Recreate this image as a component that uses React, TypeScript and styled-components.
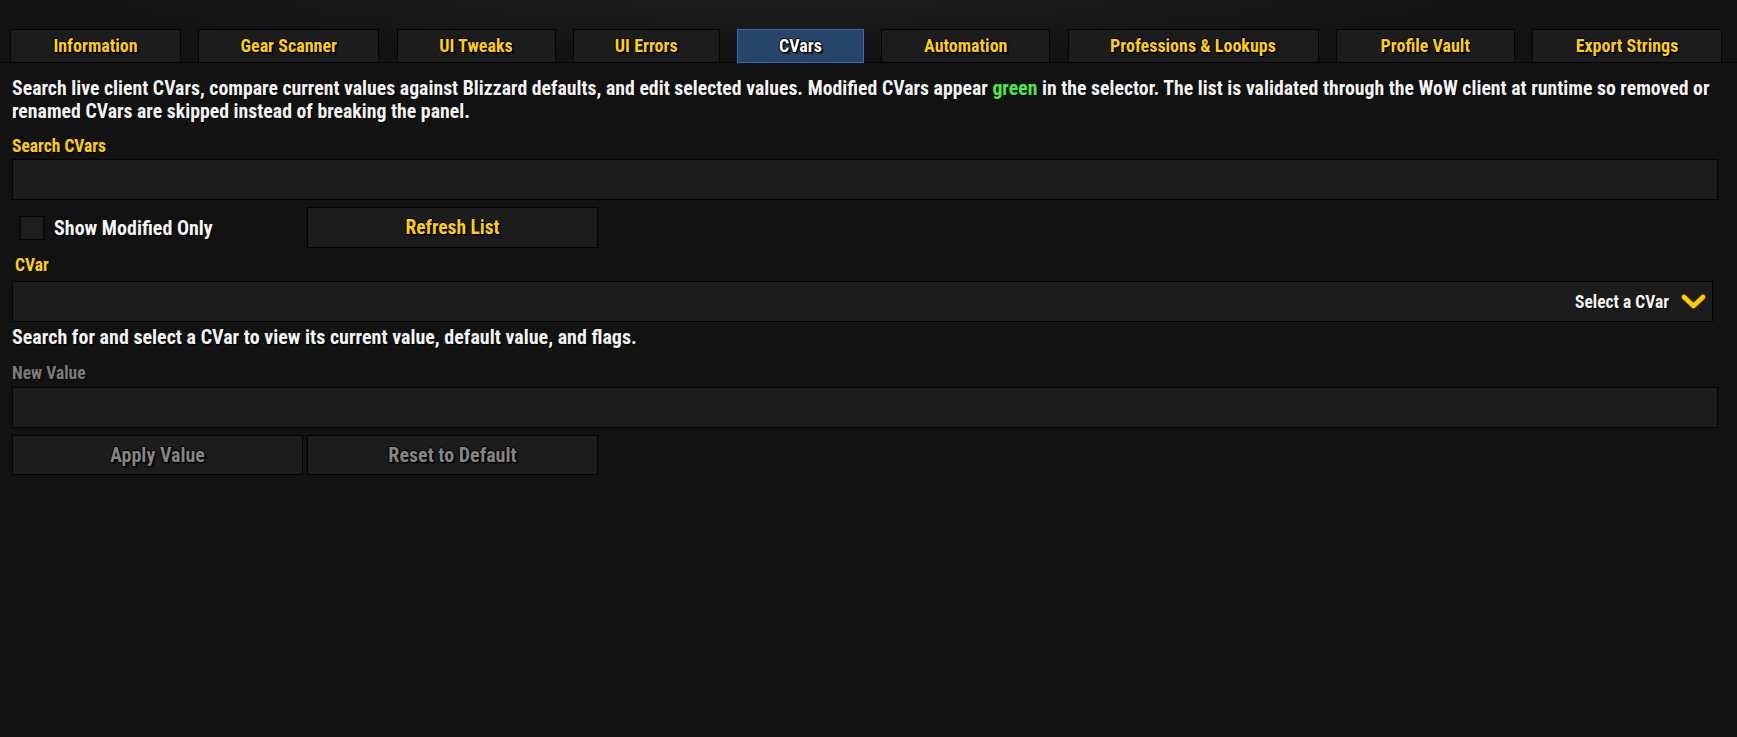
import React from "react";
import styled, { createGlobalStyle, css } from "styled-components";

const FONT = `"Roboto Condensed", "Roboto", "Open Sans", sans-serif`;

const GlobalStyle = createGlobalStyle`
  html, body {
    margin: 0;
    padding: 0;
    background: #121212;
  }
  body {
    font-family: ${FONT};
    font-stretch: condensed;
    font-weight: 700;
    color: #f2f2f2;
  }
  #root {
    min-height: 737px;
  }
`;

const outline = css`
  text-shadow: -1px 0 #000, 1px 0 #000, 0 -1px #000, 0 1px #000, 1px 1px #000,
    2px 2px 1px rgba(0, 0, 0, 0.6);
`;

const softShadow = css`
  text-shadow: 1px 1px 1px #000;
`;

const Page = styled.div`
  min-height: 737px;
  box-sizing: border-box;
  padding-top: 29px;
  background:
    radial-gradient(ellipse 900px 60px at 45% 0px, rgba(40, 40, 40, 0.5), transparent),
    #121212;
`;

const TabStrip = styled.div`
  border-bottom: 1px solid #080808;
  padding-left: 10px;
`;

const TabRow = styled.nav`
  display: flex;
  width: 1712px;
  justify-content: space-between;
`;

const Tab = styled.div<{ $w: number; $active?: boolean }>`
  width: ${(p) => p.$w}px;
  height: 34px;
  box-sizing: border-box;
  margin-bottom: -1px;
  padding-bottom: 2px;
  display: flex;
  align-items: center;
  justify-content: center;
  font-size: 18px;
  color: ${(p) => (p.$active ? "#ffffff" : "#ffd100")};
  background: ${(p) => (p.$active ? "#26456b" : "#1c1c1c")};
  border: 1px solid ${(p) => (p.$active ? "#3b6cb2" : "#040404")};
  ${outline}
`;

const Content = styled.main`
  width: 1706px;
  margin-left: 12px;
  display: flex;
  flex-direction: column;
`;

const Desc = styled.p`
  margin: 14px -10px 0 0;
  font-size: 19.8px;
  line-height: 23px;
  color: #f4f4f4;
  ${softShadow}
`;

const Green = styled.span`
  color: #48ec48;
`;

const FieldLabel = styled.div<{ $muted?: boolean; $mt: number; $indent?: number }>`
  margin-top: ${(p) => p.$mt}px;
  padding-left: ${(p) => p.$indent ?? 0}px;
  font-size: 17.5px;
  line-height: 20px;
  color: ${(p) => (p.$muted ? "#7c7c7c" : "#ffd100")};
  ${softShadow}
`;

const InputBox = styled.div<{ $mt: number }>`
  margin-top: ${(p) => p.$mt}px;
  height: 41px;
  box-sizing: border-box;
  background: #1c1c1c;
  border: 1px solid #030303;
`;

const Dropdown = styled.div`
  margin-top: 6px;
  width: 1701px;
  height: 41px;
  box-sizing: border-box;
  background: #1c1c1c;
  border: 1px solid #030303;
  display: flex;
  align-items: center;
  justify-content: flex-end;
  gap: 12px;
  padding-right: 6px;
`;

const DropText = styled.span`
  font-size: 17.5px;
  color: #f4f4f4;
  ${softShadow}
`;

const Chevron = styled.svg`
  width: 25px;
  height: 16px;
  display: block;
`;

const ControlGrid = styled.div<{ $mt: number }>`
  margin-top: ${(p) => p.$mt}px;
  display: grid;
  grid-template-columns: 291px 291px;
  column-gap: 4px;
  height: 41px;
`;

const CheckWrap = styled.label`
  display: flex;
  align-items: center;
  gap: 10px;
  padding-left: 8px;
  font-size: 20px;
  color: #f4f4f4;
  ${softShadow}
`;

const CheckBox = styled.span`
  width: 24px;
  height: 24px;
  box-sizing: border-box;
  background: #1e1e1e;
  border: 1px solid #050505;
  display: block;
`;

const Button = styled.div<{ $disabled?: boolean }>`
  box-sizing: border-box;
  height: ${(p) => (p.$disabled ? 40 : 41)}px;
  padding-bottom: 1px;
  background: #1c1c1c;
  border: 1px solid #030303;
  display: flex;
  align-items: center;
  justify-content: center;
  font-size: ${(p) => (p.$disabled ? 20 : 19.5)}px;
  color: ${(p) => (p.$disabled ? "#858585" : "#ffd100")};
  ${outline}
`;

const HelpText = styled.p`
  margin: 4px 0 0;
  font-size: 20px;
  line-height: 23px;
  color: #f4f4f4;
  ${softShadow}
`;

const tabs: { label: string; w: number; active?: boolean }[] = [
  { label: "Information", w: 171 },
  { label: "Gear Scanner", w: 181 },
  { label: "UI Tweaks", w: 159 },
  { label: "UI Errors", w: 147 },
  { label: "CVars", w: 127, active: true },
  { label: "Automation", w: 169 },
  { label: "Professions & Lookups", w: 251 },
  { label: "Profile Vault", w: 179 },
  { label: "Export Strings", w: 190 },
];

export default function App() {
  return (
    <>
      <GlobalStyle />
      <Page>
        <TabStrip>
          <TabRow>
            {tabs.map((t) => (
              <Tab key={t.label} $w={t.w} $active={t.active}>
                {t.label}
              </Tab>
            ))}
          </TabRow>
        </TabStrip>
        <Content>
          <Desc>
            Search live client CVars, compare current values against Blizzard defaults, and edit selected
            values. Modified CVars appear <Green>green</Green> in the selector. The list is validated through
            the WoW client at runtime so removed or renamed CVars are skipped instead of breaking the panel.
          </Desc>
          <FieldLabel $mt={13}>Search CVars</FieldLabel>
          <InputBox $mt={3} />
          <ControlGrid $mt={7}>
            <CheckWrap>
              <CheckBox />
              Show Modified Only
            </CheckWrap>
            <Button>Refresh List</Button>
          </ControlGrid>
          <FieldLabel $mt={7} $indent={3}>
            CVar
          </FieldLabel>
          <Dropdown>
            <DropText>Select a CVar</DropText>
            <Chevron viewBox="0 0 25 16">
              <polyline
                points="3,3 12.5,12 22,3"
                fill="none"
                stroke="#3a2a00"
                strokeWidth="6.5"
                strokeLinecap="round"
                strokeLinejoin="round"
              />
              <polyline
                points="3,3 12.5,12 22,3"
                fill="none"
                stroke="#ffcc00"
                strokeWidth="4.5"
                strokeLinecap="round"
                strokeLinejoin="round"
              />
            </Chevron>
          </Dropdown>
          <HelpText>Search for and select a CVar to view its current value, default value, and flags.</HelpText>
          <FieldLabel $muted $mt={14}>
            New Value
          </FieldLabel>
          <InputBox $mt={4} />
          <ControlGrid $mt={7}>
            <Button $disabled>Apply Value</Button>
            <Button $disabled>Reset to Default</Button>
          </ControlGrid>
        </Content>
      </Page>
    </>
  );
}
